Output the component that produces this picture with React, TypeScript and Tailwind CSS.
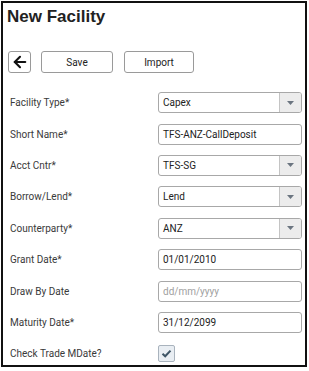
import React from 'react';
import { ArrowLeft } from 'lucide-react';

type Field = {
  label: string;
  value: string;
  kind: 'select' | 'text' | 'placeholder' | 'check';
};

const fields: Field[] = [
  { label: 'Facility Type*', value: 'Capex', kind: 'select' },
  { label: 'Short Name*', value: 'TFS-ANZ-CallDeposit', kind: 'text' },
  { label: 'Acct Cntr*', value: 'TFS-SG', kind: 'select' },
  { label: 'Borrow/Lend*', value: 'Lend', kind: 'select' },
  { label: 'Counterparty*', value: 'ANZ', kind: 'select' },
  { label: 'Grant Date*', value: '01/01/2010', kind: 'text' },
  { label: 'Draw By Date', value: 'dd/mm/yyyy', kind: 'placeholder' },
  { label: 'Maturity Date*', value: '31/12/2099', kind: 'text' },
  { label: 'Check Trade MDate?', value: '', kind: 'check' },
];

const FieldControl: React.FC<{ field: Field }> = ({ field }) => {
  if (field.kind === 'check') {
    return (
      <div className="w-[17px] h-[17px] border border-[#a9b3bd] rounded-[2px] bg-[#e9eef3] flex items-center justify-center">
        <svg width="11" height="9" viewBox="0 0 11 9">
          <path d="M1.5 4.8 L4.2 7.3 L9.5 1.6" fill="none" stroke="#3e5566" strokeWidth="2" />
        </svg>
      </div>
    );
  }

  if (field.kind === 'select') {
    return (
      <div className="w-[144px] h-[21px] border border-[#a8a8a8] rounded-[3px] flex bg-white overflow-hidden">
        <div className="flex-1 flex items-center pl-[4px] text-[10px] text-[#222]">{field.value}</div>
        <div className="w-[22px] border-l border-[#c4c4c4] bg-[#ececec] flex items-center justify-center">
          <svg width="7" height="4" viewBox="0 0 7 4">
            <path d="M0 0 L7 0 L3.5 4 Z" fill="#6b7580" />
          </svg>
        </div>
      </div>
    );
  }

  return (
    <div className="w-[144px] h-[21px] border border-[#a8a8a8] rounded-[3px] flex items-center pl-[4px] bg-white">
      <span className={field.kind === 'placeholder' ? 'text-[10px] text-[#a0a0a0]' : 'text-[10px] text-[#222]'}>
        {field.value}
      </span>
    </div>
  );
};

const App: React.FC = () => {
  return (
    <div className="w-[309px] h-[371px] bg-white pl-[1px] pt-[1px]" style={{ fontFamily: 'Roboto, "Liberation Sans", sans-serif' }}>
      <div className="w-[306px] h-[366px] border-2 border-[#111] flex flex-col">
        {/* Title */}
        <h1
          className="text-[17px] font-bold text-[#222] leading-none pl-[4px] pt-[5px]"
          style={{ fontFamily: '"Liberation Sans", Arial, sans-serif' }}
        >
          New Facility
        </h1>

        {/* Toolbar */}
        <div className="flex items-center mt-[26px] pl-[5px]">
          <button className="w-[23px] h-[22px] border border-[#9a9a9a] rounded-[3px] flex items-center justify-center bg-white">
            <ArrowLeft size={18} strokeWidth={2.8} color="#111" />
          </button>
          <button className="ml-[10px] w-[72px] h-[22px] border border-[#9a9a9a] rounded-[3px] text-[10px] text-[#222] bg-white">
            Save
          </button>
          <button className="ml-[11px] w-[70px] h-[22px] border border-[#9a9a9a] rounded-[3px] text-[10px] text-[#222] bg-white">
            Import
          </button>
        </div>

        {/* Form */}
        <div className="flex flex-col mt-[14px] pl-[7px]">
          {fields.map((f) => (
            <div key={f.label} className="h-[31.4px] flex items-center">
              <div className="w-[148px] text-[10px] text-[#3a3a3a]">{f.label}</div>
              <FieldControl field={f} />
            </div>
          ))}
        </div>
      </div>
    </div>
  );
};

export default App;
